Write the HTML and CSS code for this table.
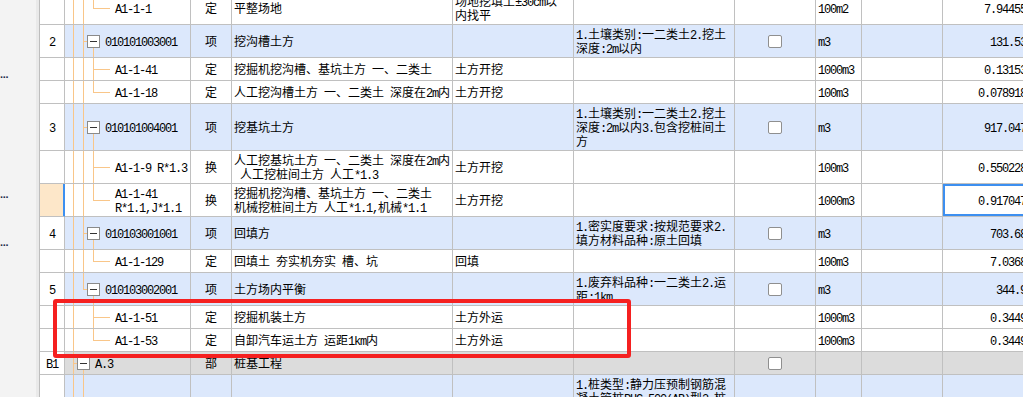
FILE: index.html
```html
<!DOCTYPE html>
<html lang="zh-CN">
<head>
<meta charset="utf-8">
<title>清单定额</title>
<link rel="stylesheet" href="styles.css">
</head>
<body>
<div class="app">
  <aside class="side">
    <div class="dot d1">...</div>
    <div class="dot d2">...</div>
    <div class="dot d3">...</div>
  </aside>
  <main class="sheet">
    <div class="rows">

      <div class="row">
        <div class="c num"></div>
        <div class="c tree td l1 l2t s2"><div class="t"><span class="m">A1-1-1</span></div></div>
        <div class="c typ"><div class="t">定</div></div>
        <div class="c"><div class="t">平整场地</div></div>
        <div class="c"><div class="t">场地挖填土<span class="m">±30cm</span>以<br>内找平</div></div>
        <div class="c"></div>
        <div class="c"></div>
        <div class="c unit"><div class="t"><span class="m">100m2</span></div></div>
        <div class="c"></div>
        <div class="c qty"><div class="t"><span class="m">7.94455</span></div></div>
      </div>

      <div class="row xiang">
        <div class="c num"><div class="t"><span class="m">2</span></div></div>
        <div class="c tree tx l1 s1 l2b"><i class="fold"></i><div class="t"><span class="m">010101003001</span></div></div>
        <div class="c typ"><div class="t">项</div></div>
        <div class="c"><div class="t">挖沟槽土方</div></div>
        <div class="c"></div>
        <div class="c"><div class="t"><span class="m">1.</span>土壤类别<span class="m">:</span>一二类土<span class="m">2.</span>挖土<br>深度<span class="m">:2m</span>以内</div></div>
        <div class="c chk"><i class="box"></i></div>
        <div class="c unit"><div class="t"><span class="m">m3</span></div></div>
        <div class="c"></div>
        <div class="c qty"><div class="t"><span class="m">131.53</span></div></div>
      </div>

      <div class="row">
        <div class="c num"></div>
        <div class="c tree td l1 l2 s2"><div class="t"><span class="m">A1-1-41</span></div></div>
        <div class="c typ"><div class="t">定</div></div>
        <div class="c"><div class="t">挖掘机挖沟槽、基坑土方<span class="m">&nbsp;</span>一、二类土</div></div>
        <div class="c"><div class="t">土方开挖</div></div>
        <div class="c"></div>
        <div class="c"></div>
        <div class="c unit"><div class="t"><span class="m">1000m3</span></div></div>
        <div class="c"></div>
        <div class="c qty"><div class="t"><span class="m">0.13153</span></div></div>
      </div>

      <div class="row">
        <div class="c num"></div>
        <div class="c tree td l1 l2t s2"><div class="t"><span class="m">A1-1-18</span></div></div>
        <div class="c typ"><div class="t">定</div></div>
        <div class="c"><div class="t">人工挖沟槽土方<span class="m">&nbsp;</span>一、二类土<span class="m">&nbsp;</span>深度在<span class="m">2m</span>内</div></div>
        <div class="c"><div class="t">土方开挖</div></div>
        <div class="c"></div>
        <div class="c"></div>
        <div class="c unit"><div class="t"><span class="m">100m3</span></div></div>
        <div class="c"></div>
        <div class="c qty"><div class="t"><span class="m">0.078918</span></div></div>
      </div>

      <div class="row xiang">
        <div class="c num"><div class="t"><span class="m">3</span></div></div>
        <div class="c tree tx l1 s1 l2b"><i class="fold"></i><div class="t"><span class="m">010101004001</span></div></div>
        <div class="c typ"><div class="t">项</div></div>
        <div class="c"><div class="t">挖基坑土方</div></div>
        <div class="c"></div>
        <div class="c"><div class="t"><span class="m">1.</span>土壤类别<span class="m">:</span>一二类土<span class="m">2.</span>挖土<br>深度<span class="m">:2m</span>以内<span class="m">3.</span>包含挖桩间土<br>方</div></div>
        <div class="c chk"><i class="box"></i></div>
        <div class="c unit"><div class="t"><span class="m">m3</span></div></div>
        <div class="c"></div>
        <div class="c qty"><div class="t"><span class="m">917.047</span></div></div>
      </div>

      <div class="row">
        <div class="c num"></div>
        <div class="c tree td l1 l2 s2"><div class="t"><span class="m">A1-1-9 R*1.3</span></div></div>
        <div class="c typ"><div class="t">换</div></div>
        <div class="c"><div class="t">人工挖基坑土方<span class="m">&nbsp;</span>一、二类土<span class="m">&nbsp;</span>深度在<span class="m">2m</span>内<br><span class="m">&nbsp;</span>人工挖桩间土方<span class="m">&nbsp;</span>人工<span class="m">*1.3</span></div></div>
        <div class="c"><div class="t">土方开挖</div></div>
        <div class="c"></div>
        <div class="c"></div>
        <div class="c unit"><div class="t"><span class="m">100m3</span></div></div>
        <div class="c"></div>
        <div class="c qty"><div class="t"><span class="m">0.550228</span></div></div>
      </div>

      <div class="row sel">
        <div class="c num"></div>
        <div class="c tree td l1 l2t s2"><div class="t"><span class="m">A1-1-41<br>R*1.1,J*1.1</span></div></div>
        <div class="c typ"><div class="t">换</div></div>
        <div class="c"><div class="t">挖掘机挖沟槽、基坑土方<span class="m">&nbsp;</span>一、二类土<br>机械挖桩间土方<span class="m">&nbsp;</span>人工<span class="m">*1.1,</span>机械<span class="m">*1.1</span></div></div>
        <div class="c"><div class="t">土方开挖</div></div>
        <div class="c"></div>
        <div class="c"></div>
        <div class="c unit"><div class="t"><span class="m">1000m3</span></div></div>
        <div class="c"></div>
        <div class="c qty cur"><div class="t"><span class="m">0.917047</span></div></div>
      </div>

      <div class="row xiang">
        <div class="c num"><div class="t"><span class="m">4</span></div></div>
        <div class="c tree tx l1 s1 l2b"><i class="fold"></i><div class="t"><span class="m">010103001001</span></div></div>
        <div class="c typ"><div class="t">项</div></div>
        <div class="c"><div class="t">回填方</div></div>
        <div class="c"></div>
        <div class="c"><div class="t"><span class="m">1.</span>密实度要求<span class="m">:</span>按规范要求<span class="m">2.</span><br>填方材料品种<span class="m">:</span>原土回填</div></div>
        <div class="c chk"><i class="box"></i></div>
        <div class="c unit"><div class="t"><span class="m">m3</span></div></div>
        <div class="c"></div>
        <div class="c qty"><div class="t"><span class="m">703.68</span></div></div>
      </div>

      <div class="row">
        <div class="c num"></div>
        <div class="c tree td l1 l2t s2"><div class="t"><span class="m">A1-1-129</span></div></div>
        <div class="c typ"><div class="t">定</div></div>
        <div class="c"><div class="t">回填土<span class="m">&nbsp;</span>夯实机夯实<span class="m">&nbsp;</span>槽、坑</div></div>
        <div class="c"><div class="t">回填</div></div>
        <div class="c"></div>
        <div class="c"></div>
        <div class="c unit"><div class="t"><span class="m">100m3</span></div></div>
        <div class="c"></div>
        <div class="c qty"><div class="t"><span class="m">7.0368</span></div></div>
      </div>

      <div class="row xiang">
        <div class="c num"><div class="t"><span class="m">5</span></div></div>
        <div class="c tree tx l1t s1 l2b"><i class="fold"></i><div class="t"><span class="m">010103002001</span></div></div>
        <div class="c typ"><div class="t">项</div></div>
        <div class="c"><div class="t">土方场内平衡</div></div>
        <div class="c"></div>
        <div class="c"><div class="t"><span class="m">1.</span>废弃料品种<span class="m">:</span>一二类土<span class="m">2.</span>运<br>距<span class="m">:1km</span></div></div>
        <div class="c chk"><i class="box"></i></div>
        <div class="c unit"><div class="t"><span class="m">m3</span></div></div>
        <div class="c"></div>
        <div class="c qty"><div class="t"><span class="m">344.9</span></div></div>
      </div>

      <div class="row">
        <div class="c num"></div>
        <div class="c tree td l2 s2"><div class="t"><span class="m">A1-1-51</span></div></div>
        <div class="c typ"><div class="t">定</div></div>
        <div class="c"><div class="t">挖掘机装土方</div></div>
        <div class="c"><div class="t">土方外运</div></div>
        <div class="c"></div>
        <div class="c"></div>
        <div class="c unit"><div class="t"><span class="m">1000m3</span></div></div>
        <div class="c"></div>
        <div class="c qty"><div class="t"><span class="m">0.3449</span></div></div>
      </div>

      <div class="row">
        <div class="c num"></div>
        <div class="c tree td l2t s2"><div class="t"><span class="m">A1-1-53</span></div></div>
        <div class="c typ"><div class="t">定</div></div>
        <div class="c"><div class="t">自卸汽车运土方<span class="m">&nbsp;</span>运距<span class="m">1km</span>内</div></div>
        <div class="c"><div class="t">土方外运</div></div>
        <div class="c"></div>
        <div class="c"></div>
        <div class="c unit"><div class="t"><span class="m">1000m3</span></div></div>
        <div class="c"></div>
        <div class="c qty"><div class="t"><span class="m">0.3449</span></div></div>
      </div>

      <div class="row bu">
        <div class="c num"><div class="t"><span class="m">B1</span></div></div>
        <div class="c tree tb s0 l1b"><i class="fold"></i><div class="t"><span class="m">A.3</span></div></div>
        <div class="c typ"><div class="t">部</div></div>
        <div class="c"><div class="t">桩基工程</div></div>
        <div class="c"></div>
        <div class="c"></div>
        <div class="c chk"><i class="box"></i></div>
        <div class="c unit"></div>
        <div class="c"></div>
        <div class="c qty"></div>
      </div>

      <div class="row xiang">
        <div class="c num"><div class="t"><span class="m">6</span></div></div>
        <div class="c tree tx l1 s1 l2b"><i class="fold"></i><div class="t"><span class="m">010301001001</span></div></div>
        <div class="c typ"><div class="t">项</div></div>
        <div class="c"><div class="t">预制钢筋混凝土管桩</div></div>
        <div class="c"></div>
        <div class="c"><div class="t"><span class="m">1.</span>桩类型<span class="m">:</span>静力压预制钢筋混<br>凝土管桩<span class="m">PHC-500(AB)</span>型<span class="m">2.</span>桩<br>长<span class="m">:</span>以设计为准<span class="m">3.</span>桩径<span class="m">:</span><br><span class="m">500mm</span><br>混凝土强度等级<span class="m">:C80</span></div></div>
        <div class="c chk"><i class="box"></i></div>
        <div class="c unit"><div class="t"><span class="m">m</span></div></div>
        <div class="c"></div>
        <div class="c qty"><div class="t"><span class="m">1280.5</span></div></div>
      </div>

    </div>
  </main>
</div>
<div class="mark"></div>
</body>
</html>
```

FILE: styles.css
```css
* { box-sizing: border-box; }

html, body {
  margin: 0;
  height: 100%;
}

body {
  position: relative;
  overflow: hidden;
  background: #fff;
  color: #000;
  font: 12px/14px "Noto Sans CJK SC", "Noto Sans", sans-serif;
}

.app {
  display: flex;
  height: 397px;
}

/* left side panel */
.side {
  flex: none;
  width: 40px;
  display: flex;
  flex-direction: column;
  background: #f3f3f3;
  border-right: 1px solid #bdbdbd;
  box-shadow: inset -3px 0 #e9e9e9;
}

.dot {
  height: 12px;
  font: bold 11px/12px "Liberation Sans", sans-serif;
  color: #1f2d4a;
  letter-spacing: -0.3px;
}
.d1 { margin-top: 68px; }
.d2 { margin-top: 108px; }
.d3 { margin-top: 36px; }

/* sheet */
.sheet {
  flex: 1;
  min-width: 0;
  overflow: hidden;
}

.rows {
  width: 993px;
  margin-top: -8px;
}

.row {
  --bg: #fff;
  display: grid;
  grid-template-columns: 25px 126px 41px 221px 121px 161px 81px 46px 81px 90px;
}
.row.xiang { --bg: #dce8fc; }
.row.bu { --bg: #dcdcdc; }

.c {
  display: flex;
  align-items: center;
  min-width: 0;
  min-height: 23px;
  padding: 2px 2px;
  overflow: hidden;
  white-space: nowrap;
  border-right: 1px solid #c0c0c0;
  border-bottom: 1px solid #c0c0c0;
  background-color: var(--bg);
}

.t { white-space: nowrap; }

.m {
  font-family: "Liberation Mono", monospace;
  font-size: 12px;
  letter-spacing: -1.2px;
  line-height: 10px;
}

.num {
  justify-content: center;
  padding: 0;
  background-color: #fff;
}

.sel .num {
  background-color: #fde7c9;
  border-right-color: #3c8ff0;
  box-shadow: inset -1px 0 #3c8ff0;
}

.typ {
  justify-content: center;
  padding: 0;
}

.unit { padding-left: 2px; }

.qty {
  justify-content: flex-end;
  padding-right: 6px;
}

.cur { box-shadow: inset 0 0 0 2px #3d8ff0; }

.chk { justify-content: center; }

.box {
  width: 14px;
  height: 13px;
  border: 1px solid #8f8f8f;
  border-radius: 2px;
  background: #fff;
}

/* tree column with connector lines */
.tree {
  --o: #f9c689;
  --g: linear-gradient(var(--o), var(--o));
  --l1: none;
  --l2: none;
  --s: none;
  background: var(--g) 8px 0 / 1px 100% no-repeat, var(--l1), var(--l2), var(--s);
  background-color: var(--bg);
}

.l1  { --l1: var(--g) 18px 0 / 1px 100% no-repeat; }
.l1t { --l1: var(--g) 18px 0 / 1px 50% no-repeat; }
.l1b { --l1: var(--g) 18px 100% / 1px 50% no-repeat; }
.l2  { --l2: var(--g) 28px 0 / 1px 100% no-repeat; }
.l2t { --l2: var(--g) 28px 0 / 1px 50% no-repeat; }
.l2b { --l2: var(--g) 28px 100% / 1px 50% no-repeat; }
.s0  { --s: var(--g) 8px 50% / 4px 1px no-repeat; }
.s1  { --s: var(--g) 18px 50% / 4px 1px no-repeat; }
.s2  { --s: var(--g) 28px 50% / 17px 1px no-repeat; }

.td { padding-left: 50px; }
.tx { padding-left: 22px; }
.tb { padding-left: 12px; }

.fold {
  flex: none;
  width: 13px;
  height: 13px;
  margin-right: 5px;
  border: 1px solid #8a8a8a;
  background: linear-gradient(#333, #333) center / 7px 1px no-repeat, #fff;
}

/* red annotation rectangle */
.mark {
  position: absolute;
  left: 53px;
  top: 299px;
  width: 578px;
  height: 59px;
  border: 4px solid #f52020;
  border-radius: 3px;
}
```
